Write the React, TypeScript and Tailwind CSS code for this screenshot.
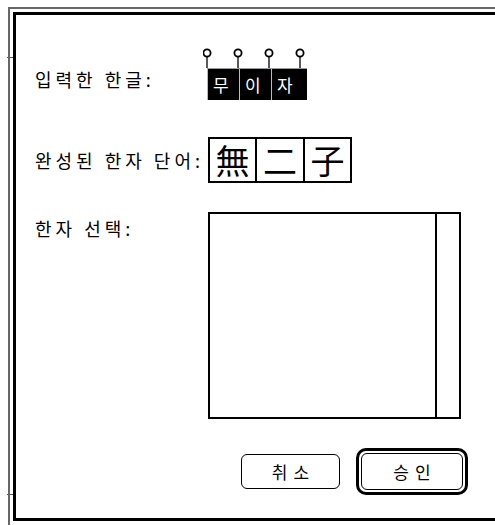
import React from "react";

function Pins() {
  const xs = [4, 35, 66, 97];
  return (
    <svg width="104" height="20" viewBox="0 0 104 20" className="-ml-[4px] block">
      {xs.map((x) => (
        <g key={x}>
          <line x1={x} y1={8} x2={x} y2={20} stroke="#000" strokeWidth="1.3" />
          <circle cx={x} cy={5} r={3.6} fill="#fff" stroke="#000" strokeWidth="1.8" />
        </g>
      ))}
    </svg>
  );
}

export default function App() {
  const label = "w-[172px] shrink-0 leading-[22px] text-[18px] tracking-[4px] text-black";
  return (
    <div className="w-[495px] h-[525px] bg-white overflow-hidden relative font-['Noto_Sans_CJK_KR',sans-serif] text-black">
      <div className="absolute left-[7px] top-[57px] w-[9px] h-px bg-[#555]" />
      <div className="absolute left-[7px] top-[494px] w-[9px] h-px bg-[#555]" />
      <div className="absolute left-[8px] top-[7px] w-[487px] h-[518px] border-l-2 border-t-2 border-[#666]" />
      <div className="absolute left-[13px] top-[12px] w-[482px] h-[509px] border-l-[3px] border-t-[3px] border-b-[3px] border-black" />
      <div className="relative w-[475px] overflow-hidden pl-[35px] pt-[48px] flex flex-col">
        {/* Row 1 */}
        <div className="flex">
          <div className={label + " pt-[20px]"}>입력한 한글:</div>
          <div className="flex flex-col">
            <Pins />
            <div className="flex h-[32px] bg-black border-t border-[#999]">
              {["무", "이", "자"].map((c) => (
                <div
                  key={c}
                  className="w-[32px] h-full border-l border-[#bbb] text-white text-[17px] leading-[31px] pl-[5px]"
                >
                  {c}
                </div>
              ))}
            </div>
          </div>
        </div>

        {/* Row 2 */}
        <div className="mt-[37px] flex">
          <div className={label + " pt-[12px]"}>완성된 한자 단어:</div>
          <div className="ml-[1px] flex h-[46px] border-2 border-black">
            <div className="w-[45px] h-full flex items-center justify-center text-[34px] leading-none">無</div>
            <div className="w-[48px] h-full border-l-2 border-black flex items-center justify-center text-[34px] leading-none">二</div>
            <div className="w-[47px] h-full border-l-2 border-black flex items-center justify-center text-[34px] leading-none">子</div>
          </div>
        </div>

        {/* Row 3 */}
        <div className="mt-[29px] flex">
          <div className={label + " pt-[5px]"}>한자 선택:</div>
          <div className="ml-[1px] w-[253px] h-[207px] border-2 border-black flex justify-end">
            <div className="w-[24px] h-full border-l-2 border-black" />
          </div>
        </div>

        {/* Buttons */}
        <div className="mt-[29px] flex items-center">
          <button className="ml-[206px] w-[99px] h-[35px] border-[1.5px] border-black rounded-[6px] bg-white text-[17px] tracking-[6px] leading-none flex items-center justify-center pl-[6px]">
            취소
          </button>
          <div className="ml-[16px] w-[112px] h-[47px] border-[3px] border-black rounded-[10px] p-[2px]">
            <button className="w-full h-full border-[1.5px] border-black rounded-[6px] bg-white text-[17px] tracking-[6px] leading-none flex items-center justify-center pl-[6px]">
              승인
            </button>
          </div>
        </div>
      </div>
    </div>
  );
}
